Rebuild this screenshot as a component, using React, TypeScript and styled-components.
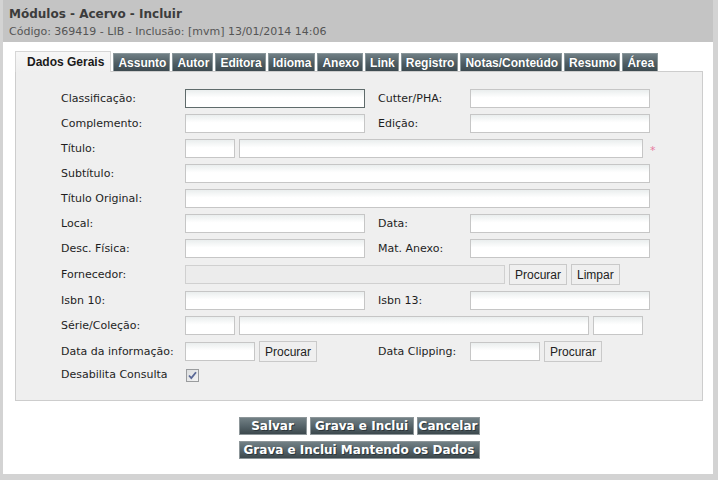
import React from 'react';
import styled, { createGlobalStyle, css } from 'styled-components';

const GlobalStyle = createGlobalStyle`
	html, body {
		margin: 0;
		padding: 0;
		background: #ffffff;
	}
	* {
		box-sizing: border-box;
	}
`;

const TABS = [
	'Dados Gerais',
	'Assunto',
	'Autor',
	'Editora',
	'Idioma',
	'Anexo',
	'Link',
	'Registro',
	'Notas/Conteúdo',
	'Resumo',
	'Área',
];

const App: React.FC = () => {
	return (
		<SWindow>
			<GlobalStyle />
			<Header>
				<Title>Módulos - Acervo - Incluir</Title>
				<SubTitle>Código: 369419 - LIB - Inclusão: [mvm] 13/01/2014 14:06</SubTitle>
			</Header>
			<Content>
				<TabBar>
					{TABS.map((t, i) => (
						<Tab key={t} $active={i === 0}>
							{t}
						</Tab>
					))}
				</TabBar>
				<Panel>
					<Row>
						<Label>Classificação:</Label>
						<Cell>
							<Input $w={180} $focus />
						</Cell>
						<RightLabel>Cutter/PHA:</RightLabel>
						<Cell>
							<Input $w={180} />
						</Cell>
					</Row>
					<Row>
						<Label>Complemento:</Label>
						<Cell>
							<Input $w={180} />
						</Cell>
						<RightLabel>Edição:</RightLabel>
						<Cell>
							<Input $w={180} />
						</Cell>
					</Row>
					<Row>
						<Label>Título:</Label>
						<Input $w={50} />
						<Input $w={404} />
						<Required>*</Required>
					</Row>
					<Row>
						<Label>Subtítulo:</Label>
						<Input $w={465} />
					</Row>
					<Row>
						<Label>Título Original:</Label>
						<Input $w={465} />
					</Row>
					<Row>
						<Label>Local:</Label>
						<Cell>
							<Input $w={180} />
						</Cell>
						<RightLabel>Data:</RightLabel>
						<Cell>
							<Input $w={180} />
						</Cell>
					</Row>
					<Row>
						<Label>Desc. Física:</Label>
						<Cell>
							<Input $w={180} />
						</Cell>
						<RightLabel>Mat. Anexo:</RightLabel>
						<Cell>
							<Input $w={180} />
						</Cell>
					</Row>
					<Row>
						<Label>Fornecedor:</Label>
						<Input $w={320} disabled />
						<SmallButton type='button'>Procurar</SmallButton>
						<SmallButton type='button'>Limpar</SmallButton>
					</Row>
					<Row>
						<Label>Isbn 10:</Label>
						<Cell>
							<Input $w={180} />
						</Cell>
						<RightLabel>Isbn 13:</RightLabel>
						<Cell>
							<Input $w={180} />
						</Cell>
					</Row>
					<Row>
						<Label>Série/Coleção:</Label>
						<Input $w={50} />
						<Input $w={350} />
						<Input $w={50} />
					</Row>
					<Row>
						<Label>Data da informação:</Label>
						<Cell>
							<Input $w={70} />
							<SmallButton type='button'>Procurar</SmallButton>
						</Cell>
						<RightLabel>Data Clipping:</RightLabel>
						<Cell>
							<Input $w={70} />
							<SmallButton type='button'>Procurar</SmallButton>
						</Cell>
					</Row>
					<Row $compact>
						<Label>Desabilita Consulta</Label>
						<CheckBox>
							<svg width='11' height='11' viewBox='0 0 11 11'>
								<path d='M2 5.5 L4.3 8 L9 2.2' fill='none' stroke='#5a6896' strokeWidth='1.8' />
							</svg>
						</CheckBox>
					</Row>
				</Panel>
				<Actions>
					<ActionRow>
						<ActionButton type='button' $w={68}>
							Salvar
						</ActionButton>
						<ActionButton type='button' $w={104}>
							Grava e Inclui
						</ActionButton>
						<ActionButton type='button' $w={63}>
							Cancelar
						</ActionButton>
					</ActionRow>
					<ActionRow>
						<ActionButton type='button' $w={241}>
							Grava e Inclui Mantendo os Dados
						</ActionButton>
					</ActionRow>
				</Actions>
			</Content>
		</SWindow>
	);
};

export default App;

const SWindow = styled.div`
	width: 718px;
	height: 480px;
	display: flex;
	flex-direction: column;
	background: #ffffff;
	border-left: 3px solid #d3d3d3;
	border-right: 5px solid #d3d3d3;
	border-bottom: 6px solid #d3d3d3;
	font-family: 'DejaVu Sans', Verdana, sans-serif;
	font-size: 11px;
	color: #1e1e1e;
`;

const Header = styled.div`
	height: 42px;
	padding: 7px 6px 0;
	background: #c4c4c4;
`;

const Title = styled.div`
	font-size: 12px;
	font-weight: 700;
	line-height: 15px;
	color: #3c3c3c;
`;

const SubTitle = styled.div`
	margin-top: 3px;
	font-size: 11px;
	line-height: 14px;
	color: #555555;
`;

const Content = styled.div`
	padding: 9px 10px 0 12px;
`;

const TabBar = styled.div`
	display: flex;
	align-items: flex-end;
	gap: 2px;
	height: 20px;
	position: relative;
	z-index: 1;
`;

const Tab = styled.div<{ $active?: boolean }>`
	display: flex;
	align-items: center;
	height: 18px;
	padding: 0 3px 0 4px;
	font-family: 'Liberation Sans', Arial, sans-serif;
	font-size: 12px;
	font-weight: 700;
	color: #ffffff;
	text-shadow: 0 0 1px #2d3a3f;
	background: linear-gradient(#6f7e84, #4f5d63 55%, #3d4a50);
	border: 1px solid #8a979b;
	border-bottom: none;
	white-space: nowrap;

	${({ $active }) =>
		$active &&
		css`
			height: 21px;
			margin-bottom: -1px;
			padding: 0 6px 0 11px;
			color: #1a1a1a;
			text-shadow: none;
			background: linear-gradient(#f7f7f7, #efefef);
			border: 1px solid #d6d6d6;
			border-bottom: none;
		`}
`;

const Panel = styled.div`
	width: 688px;
	display: flex;
	flex-direction: column;
	gap: 6px;
	padding: 17px 0 18px 45px;
	background: #efefef;
	border: 1px solid #cdcdcd;
`;

const Row = styled.div<{ $compact?: boolean }>`
	display: flex;
	align-items: center;
	gap: 4px;
	min-height: ${({ $compact }) => ($compact ? '13px' : '19px')};
`;

const Label = styled.div`
	width: 120px;
	flex: none;
	white-space: nowrap;
	padding-bottom: 1px;
`;

const RightLabel = styled.div`
	width: 88px;
	flex: none;
	margin-left: 9px;
	white-space: nowrap;
	padding-bottom: 1px;
`;

const Cell = styled.div`
	display: flex;
	align-items: center;
	gap: 4px;
	width: 180px;
	flex: none;
`;

const Input = styled.input<{ $w: number; $focus?: boolean }>`
	width: ${({ $w }) => $w}px;
	height: 19px;
	flex: none;
	margin: 0;
	padding: 0 3px;
	border: 1px solid ${({ $focus }) => ($focus ? '#5f6b6b' : '#c6c6c6')};
	background: linear-gradient(#eaeeee, #ffffff 45%);
	font-family: 'DejaVu Sans', Verdana, sans-serif;
	font-size: 11px;
	outline: none;

	&:disabled {
		background: #ececec;
		border-color: #d0d0d0;
	}
`;

const Required = styled.span`
	margin-left: 3px;
	font-size: 11px;
	color: #e87ba0;
	line-height: 1;
	padding-top: 4px;
`;

const SmallButton = styled.button`
	height: 21px;
	flex: none;
	margin: 0;
	padding: 0 5px;
	font-family: 'Liberation Sans', Arial, sans-serif;
	font-size: 12px;
	color: #222222;
	background: #efefef;
	border: 1px solid #c9c9c9;
	cursor: pointer;
`;

const CheckBox = styled.span`
	display: flex;
	align-items: center;
	justify-content: center;
	width: 13px;
	height: 13px;
	margin-left: 1px;
	border: 1px solid #9a9c9e;
	background: linear-gradient(135deg, #dcdedf, #f4f4f4);
`;

const Actions = styled.div`
	display: flex;
	flex-direction: column;
	align-items: center;
	gap: 6px;
	margin-top: 16px;
`;

const ActionRow = styled.div`
	display: flex;
	gap: 3px;
`;

const ActionButton = styled.button<{ $w?: number }>`
	${({ $w }) => ($w ? `width: ${$w}px;` : '')}
	height: 18px;
	margin: 0;
	padding: 0;
	font-family: 'DejaVu Sans', Verdana, sans-serif;
	font-size: 12px;
	font-weight: 700;
	line-height: 14px;
	color: #ffffff;
	text-shadow: 1px 1px 0 #2c363a;
	background: linear-gradient(#728085, #56646a 50%, #3c484d);
	border: 1px solid #8d9699;
	white-space: nowrap;
	cursor: pointer;
`;
